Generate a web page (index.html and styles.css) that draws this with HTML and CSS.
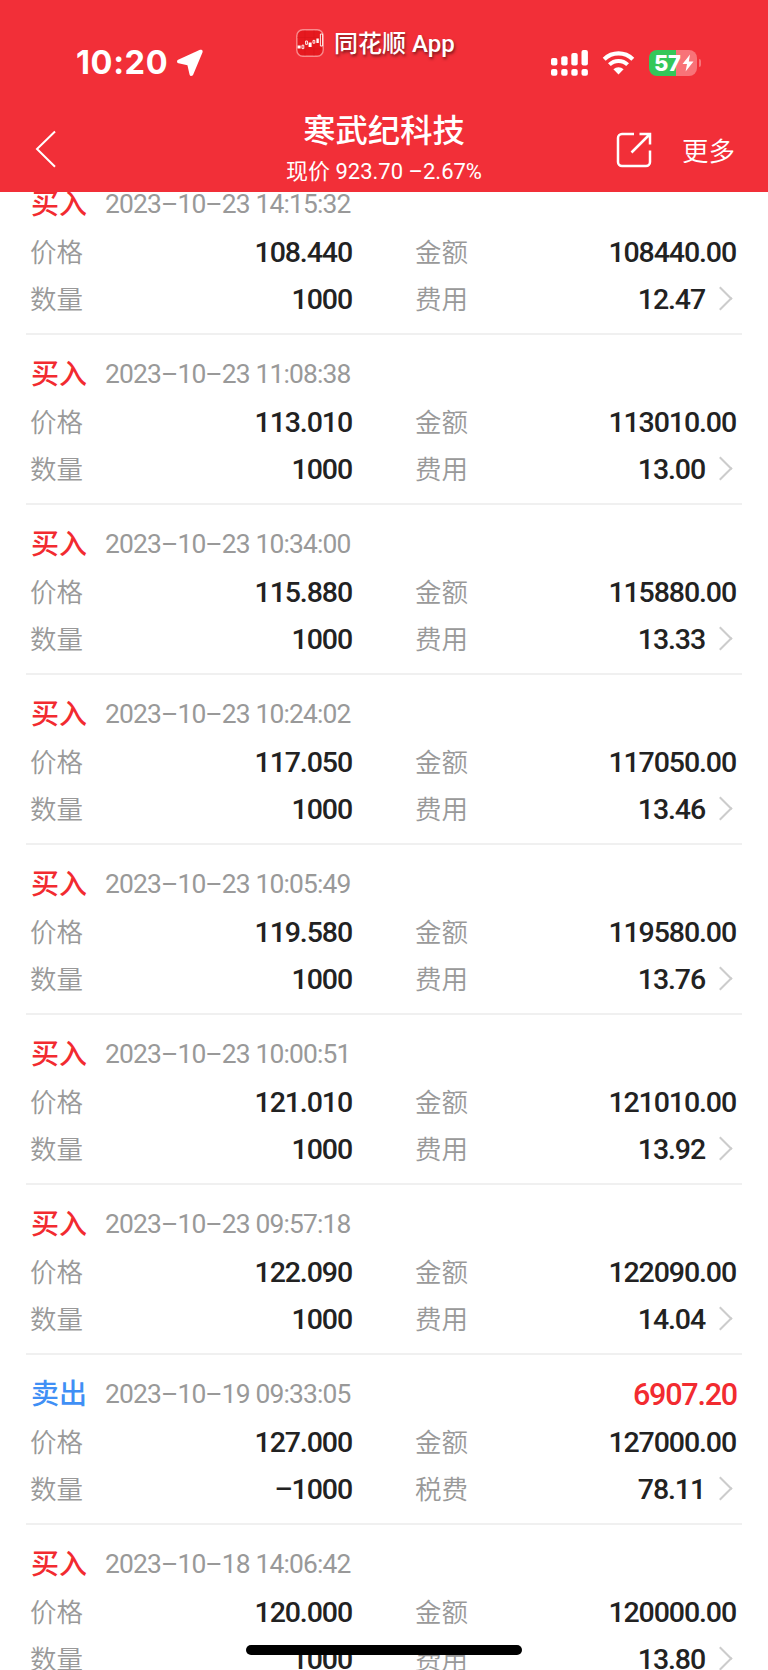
FILE: index.html
```html
<!DOCTYPE html>
<html lang="zh-CN">
<head>
    <meta charset="UTF-8">
    <meta name="viewport" content="width=device-width, initial-scale=1.0">
    <title>寒武纪科技</title>
    <link rel="stylesheet" href="styles.css">
</head>
<body>
    <header class="header">
        <!-- Status bar -->
        <div class="status-bar">
            <div class="status-left">
                <span class="time">10:20</span>
                <svg class="location" width="28" height="28" viewBox="0 0 28 28">
                    <path d="M24.8 2.6 L2.9 12.4 L13 14.6 L15.4 25 Z" fill="#fff" stroke="#fff" stroke-width="3.8" stroke-linejoin="round"/>
                </svg>
            </div>
            <div class="app-tag">
                <svg class="app-icon" width="28" height="28" viewBox="0 0 28 28">
                    <rect x="0.8" y="0.8" width="26.4" height="26.4" rx="6" fill="#e6191f" stroke="#f88a8c" stroke-width="1.4"/>
                    <path d="M1.5 8.5h25M1.5 20h25M9 1.5v25M18 1.5v25" stroke="#d9151b" stroke-width="0.6"/>
                    <path d="M1.6 16.4h3v3h-3zM12.6 13.6h3v4.4h-3zM20.4 9.6h2.4v4.4h-2.4z" fill="#fff"/>
                    <path d="M6 16.2h1.8v3.4h-1.8zM9.6 12h1.8v3.4h-1.8zM17 11.4h1.8v2.8h-1.8zM24.4 5h2.2v12h-2.2z" fill="none" stroke="#fff" stroke-width="0.9"/>
                </svg>
                <span>同花顺 App</span>
            </div>
            <div class="status-right">
                <svg width="38" height="26" viewBox="0 0 38 26" fill="#fff">
                    <rect x="0" y="8" width="6.4" height="7.6" rx="2"/>
                    <rect x="10.2" y="6.2" width="6.4" height="9.4" rx="2"/>
                    <rect x="20.3" y="3" width="6.4" height="12.6" rx="2"/>
                    <rect x="30.5" y="0" width="6.4" height="15.6" rx="2"/>
                    <rect x="0" y="19" width="6.4" height="6.8" rx="2"/>
                    <rect x="10.2" y="19" width="6.4" height="6.8" rx="2"/>
                    <rect x="20.3" y="19" width="6.4" height="6.8" rx="2"/>
                    <rect x="30.5" y="19" width="6.4" height="6.8" rx="2"/>
                </svg>
                <svg class="wifi" width="33" height="24" viewBox="0 0 33 24">
                    <path d="M2.2 8.2 A20.5 20.5 0 0 1 30.8 8.2" fill="none" stroke="#fff" stroke-width="4.2"/>
                    <path d="M7.4 13.6 A13 13 0 0 1 25.6 13.6" fill="none" stroke="#fff" stroke-width="4"/>
                    <path d="M11.4 18.2 A7.4 7.4 0 0 1 21.6 18.2 L16.5 23.4 Z" fill="#fff"/>
                </svg>
                <div class="battery">
                    <span>57</span>
                    <svg width="12" height="18" viewBox="0 0 12 18">
                        <path d="M8 0.5 L0.5 10 H5 L3.6 17.5 L11.5 7.4 H6.8 Z" fill="#fff"/>
                    </svg>
                </div>
                <div class="battery-cap"></div>
            </div>
        </div>

        <!-- Title bar -->
        <div class="nav-bar">
            <svg class="back" width="24" height="40" viewBox="0 0 24 40">
                <path d="M21 2.5 L3 20 L21 37.8" fill="none" stroke="#fff" stroke-width="2"/>
            </svg>
            <div class="title">
                <h1>寒武纪科技</h1>
                <p>现价 923.70 –2.67%</p>
            </div>
            <div class="actions">
                <svg width="36" height="36" viewBox="0 0 36 36" fill="none" stroke="#fff" stroke-width="2.5">
                    <path d="M18 2 H6 A4 4 0 0 0 2 6 V30 A4 4 0 0 0 6 34 H30 A4 4 0 0 0 34 30 V18.5"/>
                    <path d="M23.5 2 H34 V12.5 M34 2 L15.5 20.5"/>
                </svg>
                <span>更多</span>
            </div>
        </div>
    </header>

    <!-- Trade records -->
    <main class="list">
        <section class="record">
            <div class="head"><b class="buy">买入</b><time>2023–10–23 14:15:32</time></div>
            <div class="row"><label>价格</label><span>108.440</span><label>金额</label><span>108440.00</span></div>
            <div class="row"><label>数量</label><span>1000</span><label>费用</label><span class="fee">12.47</span></div>
        </section>
        <section class="record">
            <div class="head"><b class="buy">买入</b><time>2023–10–23 11:08:38</time></div>
            <div class="row"><label>价格</label><span>113.010</span><label>金额</label><span>113010.00</span></div>
            <div class="row"><label>数量</label><span>1000</span><label>费用</label><span class="fee">13.00</span></div>
        </section>
        <section class="record">
            <div class="head"><b class="buy">买入</b><time>2023–10–23 10:34:00</time></div>
            <div class="row"><label>价格</label><span>115.880</span><label>金额</label><span>115880.00</span></div>
            <div class="row"><label>数量</label><span>1000</span><label>费用</label><span class="fee">13.33</span></div>
        </section>
        <section class="record">
            <div class="head"><b class="buy">买入</b><time>2023–10–23 10:24:02</time></div>
            <div class="row"><label>价格</label><span>117.050</span><label>金额</label><span>117050.00</span></div>
            <div class="row"><label>数量</label><span>1000</span><label>费用</label><span class="fee">13.46</span></div>
        </section>
        <section class="record">
            <div class="head"><b class="buy">买入</b><time>2023–10–23 10:05:49</time></div>
            <div class="row"><label>价格</label><span>119.580</span><label>金额</label><span>119580.00</span></div>
            <div class="row"><label>数量</label><span>1000</span><label>费用</label><span class="fee">13.76</span></div>
        </section>
        <section class="record">
            <div class="head"><b class="buy">买入</b><time>2023–10–23 10:00:51</time></div>
            <div class="row"><label>价格</label><span>121.010</span><label>金额</label><span>121010.00</span></div>
            <div class="row"><label>数量</label><span>1000</span><label>费用</label><span class="fee">13.92</span></div>
        </section>
        <section class="record">
            <div class="head"><b class="buy">买入</b><time>2023–10–23 09:57:18</time></div>
            <div class="row"><label>价格</label><span>122.090</span><label>金额</label><span>122090.00</span></div>
            <div class="row"><label>数量</label><span>1000</span><label>费用</label><span class="fee">14.04</span></div>
        </section>
        <section class="record">
            <div class="head"><b class="sell">卖出</b><time>2023–10–19 09:33:05</time><strong class="profit">6907.20</strong></div>
            <div class="row"><label>价格</label><span>127.000</span><label>金额</label><span>127000.00</span></div>
            <div class="row"><label>数量</label><span>–1000</span><label>税费</label><span class="fee">78.11</span></div>
        </section>
        <section class="record">
            <div class="head"><b class="buy">买入</b><time>2023–10–18 14:06:42</time></div>
            <div class="row"><label>价格</label><span>120.000</span><label>金额</label><span>120000.00</span></div>
            <div class="row"><label>数量</label><span>1000</span><label>费用</label><span class="fee">13.80</span></div>
        </section>
    </main>

    <div class="home-indicator"></div>
</body>
</html>
```

FILE: styles.css
```css
* {
    box-sizing: border-box;
}
body {
    margin: 0;
    height: 1670px;
    overflow: hidden;
    background: #fff;
    font-family: Roboto, "Noto Sans CJK SC", sans-serif;
}

/* Header */
.header {
    position: relative;
    z-index: 1;
    height: 192px;
    background: #f22f38;
    color: #fff;
}
.status-bar {
    display: grid;
    grid-template-columns: 220px 1fr auto;
    height: 104px;
    padding: 0 67px 0 76px;
}
.status-left,
.status-right {
    display: flex;
    align-items: center;
    height: 125px;
}
.time {
    margin-top: 2px;
    font: bold 32.5px/1 Inter, sans-serif;
    letter-spacing: 0.6px;
}
.location {
    margin-left: 8px;
}
.app-tag {
    display: flex;
    align-items: center;
    gap: 10px;
    height: 86px;
    font-size: 24px;
    font-weight: 500;
    text-shadow: 1px 2px 3px rgba(0, 0, 0, 0.5);
}
.app-tag span {
    margin-top: -3px;
}
.wifi {
    margin: 0 14px 0 13px;
}
.battery {
    display: flex;
    align-items: center;
    gap: 1px;
    width: 48px;
    height: 26px;
    padding-left: 5px;
    border-radius: 8px;
    background: linear-gradient(90deg, #34c759 57%, #f87378 57%);
    font: 800 22px/26px Inter, sans-serif;
    letter-spacing: -0.3px;
}
.battery-cap {
    width: 2px;
    height: 8px;
    margin-left: 2px;
    border-radius: 0 4px 4px 0;
    background: #f87378;
}
.nav-bar {
    display: grid;
    grid-template-columns: 1fr auto 1fr;
    padding: 0 34px;
}
.back {
    margin-top: 25px;
}
.title {
    text-align: center;
}
.title h1 {
    margin: 6px 0 0;
    font-size: 32.3px;
    font-weight: 500;
    line-height: 42px;
}
.title p {
    margin: 5px 0 0;
    font-size: 22px;
    line-height: 30px;
}
.actions {
    display: flex;
    justify-content: flex-end;
    align-items: center;
    gap: 30px;
    height: 92px;
    margin-right: -1px;
    font-size: 26.5px;
    font-weight: 350;
}
.actions span {
    margin-top: -2px;
}

/* Records */
.list {
    margin: -27px 26px 0;
}
.record {
    height: 170px;
    padding: 16px 5px 0;
    border-bottom: 2px solid #f0f0f0;
}
.head {
    display: flex;
    align-items: center;
    height: 47px;
}
.head b {
    width: 74px;
    margin-top: -5px;
    font-size: 28px;
    font-weight: 500;
}
.buy {
    color: #f22b30;
}
.sell {
    color: #3f8ff5;
}
.head time {
    margin-top: -2px;
    color: #999;
    font-size: 26.4px;
    letter-spacing: -0.85px;
}
.profit {
    margin-left: auto;
    color: #f22b30;
    font-size: 30.5px;
    font-weight: 500;
    letter-spacing: -1.2px;
}
.row {
    display: grid;
    grid-template-columns: 161px 160px 162px 1fr;
    align-items: center;
    height: 47px;
}
.row label {
    margin: -3px 0 0 -1px;
    color: #999;
    font-size: 26.5px;
    font-weight: 350;
}
.row label:nth-of-type(2) {
    padding-left: 64px;
}
.row span {
    margin: 2px 1px 0 0;
    color: #222;
    font-size: 28.5px;
    font-weight: 500;
    letter-spacing: -1.1px;
    text-align: right;
}
.row label + span:nth-of-type(1) {
    margin-right: 0;
}
.row .fee {
    display: flex;
    justify-content: flex-end;
    align-items: center;
}
.fee::after {
    content: "";
    width: 15px;
    height: 15px;
    margin: 0 7px 3px 7px;
    border: solid #ccc;
    border-width: 2px 2px 0 0;
    transform: rotate(45deg);
}

.home-indicator {
    position: fixed;
    left: 246px;
    bottom: 15px;
    z-index: 2;
    width: 276px;
    height: 10px;
    border-radius: 5px;
    background: #000;
}
```
